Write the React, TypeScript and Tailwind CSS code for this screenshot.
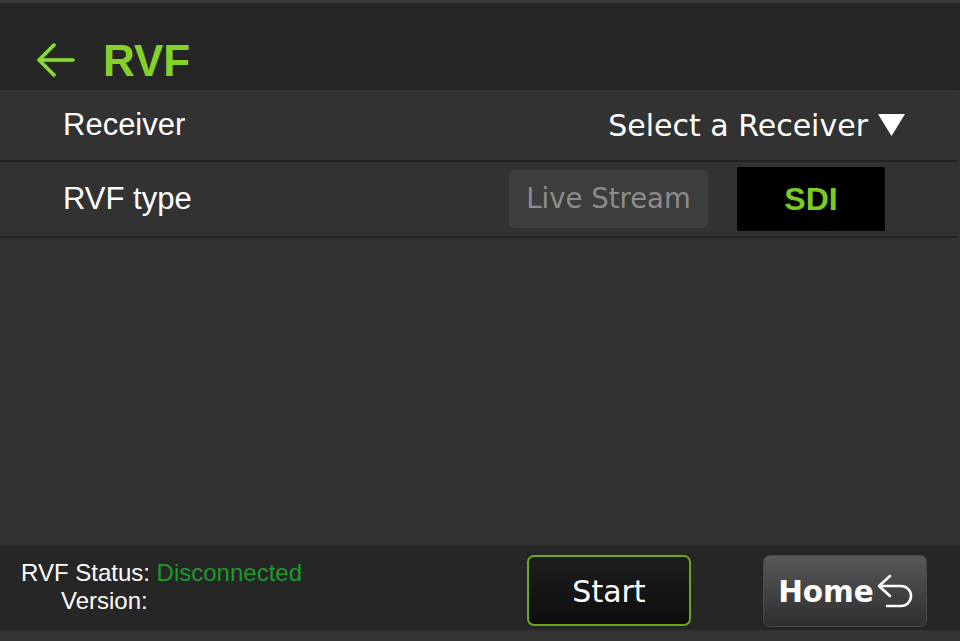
import React from 'react';

function BackArrow() {
  return (
    <svg width="40" height="36" viewBox="0 0 40 36" fill="none" className="shrink-0">
      <path d="M2 18H36M17 3L2 18L17 33" stroke="#1f3a10" strokeWidth="6" strokeLinecap="round" strokeLinejoin="round" />
      <path d="M2 18H36M17 3L2 18L17 33" stroke="#92d83c" strokeWidth="3.5" strokeLinecap="round" strokeLinejoin="round" />
    </svg>
  );
}

function ReturnIcon() {
  return (
    <svg width="40" height="36" viewBox="0 0 40 36" fill="none" className="shrink-0">
      <path
        d="M14 2L3 12L14 22M3 12H25A10 10 0 0 1 25 32H11"
        stroke="#ffffff"
        strokeWidth="2.6"
        strokeLinecap="round"
        strokeLinejoin="round"
      />
    </svg>
  );
}

export default function App() {
  return (
    <div className="w-[960px] h-[641px] flex flex-col bg-[#333333] overflow-hidden" style={{ fontFamily: '"Liberation Sans", Arial, sans-serif' }}>
      {/* Header */}
      <div className="h-[90px] shrink-0 bg-[#262626] border-t-[3px] border-[#3b3b3b] flex items-end pl-[37px] pb-[12px] gap-[26px]">
        <BackArrow />
        <h1 className="text-[44px] leading-[34px] font-bold text-[#84d12a]">RVF</h1>
      </div>

      {/* Settings rows */}
      <div className="flex-1 flex flex-col bg-[#323232] rounded-b-[8px] mr-[3px]">
        <div className="h-[72px] shrink-0 flex items-center justify-between pl-[63px] pr-[52px] border-b-2 border-[#232323]">
          <span className="text-[31px] text-white">Receiver</span>
          <button
            className="flex items-center gap-[10px] text-[30px] text-white"
            style={{ fontFamily: '"DejaVu Sans", Verdana, sans-serif' }}
          >
            <span>Select a Receiver</span>
            <svg width="27" height="22" viewBox="0 0 27 22">
              <path d="M0 0H27L13.5 22Z" fill="#ffffff" />
            </svg>
          </button>
        </div>
        <div className="h-[76px] shrink-0 flex items-center justify-between pl-[63px] pr-[72px] border-b-2 border-[#232323]">
          <span className="text-[31px] text-white">RVF type</span>
          <div className="flex items-center gap-[29px]">
            <button
              className="w-[199px] h-[58px] rounded-[5px] bg-[#3d3d3d] text-[27.5px] text-[#8c8c8c] flex items-center justify-center"
              style={{ fontFamily: '"DejaVu Sans", Verdana, sans-serif' }}
            >
              Live Stream
            </button>
            <button className="w-[148px] h-[64px] rounded-[2px] bg-black text-[32px] font-bold text-[#7acc22] flex items-center justify-center">
              SDI
            </button>
          </div>
        </div>
        <div className="flex-1" />
      </div>

      {/* Footer */}
      <div className="h-[85px] shrink-0 bg-[#262626] flex items-start pt-[10px] pl-[21px] mt-[1px] mb-[11px]">
        <div className="w-[506px] pt-[4px] text-[24px] leading-[28px] text-white">
          <div className="whitespace-nowrap">
            RVF Status: <span className="text-[#1a9a2c]">Disconnected</span>
          </div>
          <div className="pl-[40px]">Version:</div>
        </div>
        <button
          className="w-[164px] h-[71px] rounded-[7px] border-2 border-[#6aa61e] bg-gradient-to-b from-[#1d1d1d] to-[#0e0e0e] text-[30px] text-white flex items-center justify-center pt-[2px]"
          style={{ fontFamily: '"DejaVu Sans", Verdana, sans-serif' }}
        >
          Start
        </button>
        <button
          className="ml-[72px] w-[164px] h-[72px] rounded-[7px] border border-[#4a4a4a] bg-gradient-to-b from-[#585858] to-[#2f2f2f] text-[29.5px] font-bold text-white flex items-center justify-center gap-[2px] pl-[4px] pt-[2px]"
          style={{ fontFamily: '"DejaVu Sans", Verdana, sans-serif' }}
        >
          <span>Home</span>
          <ReturnIcon />
        </button>
      </div>
    </div>
  );
}
